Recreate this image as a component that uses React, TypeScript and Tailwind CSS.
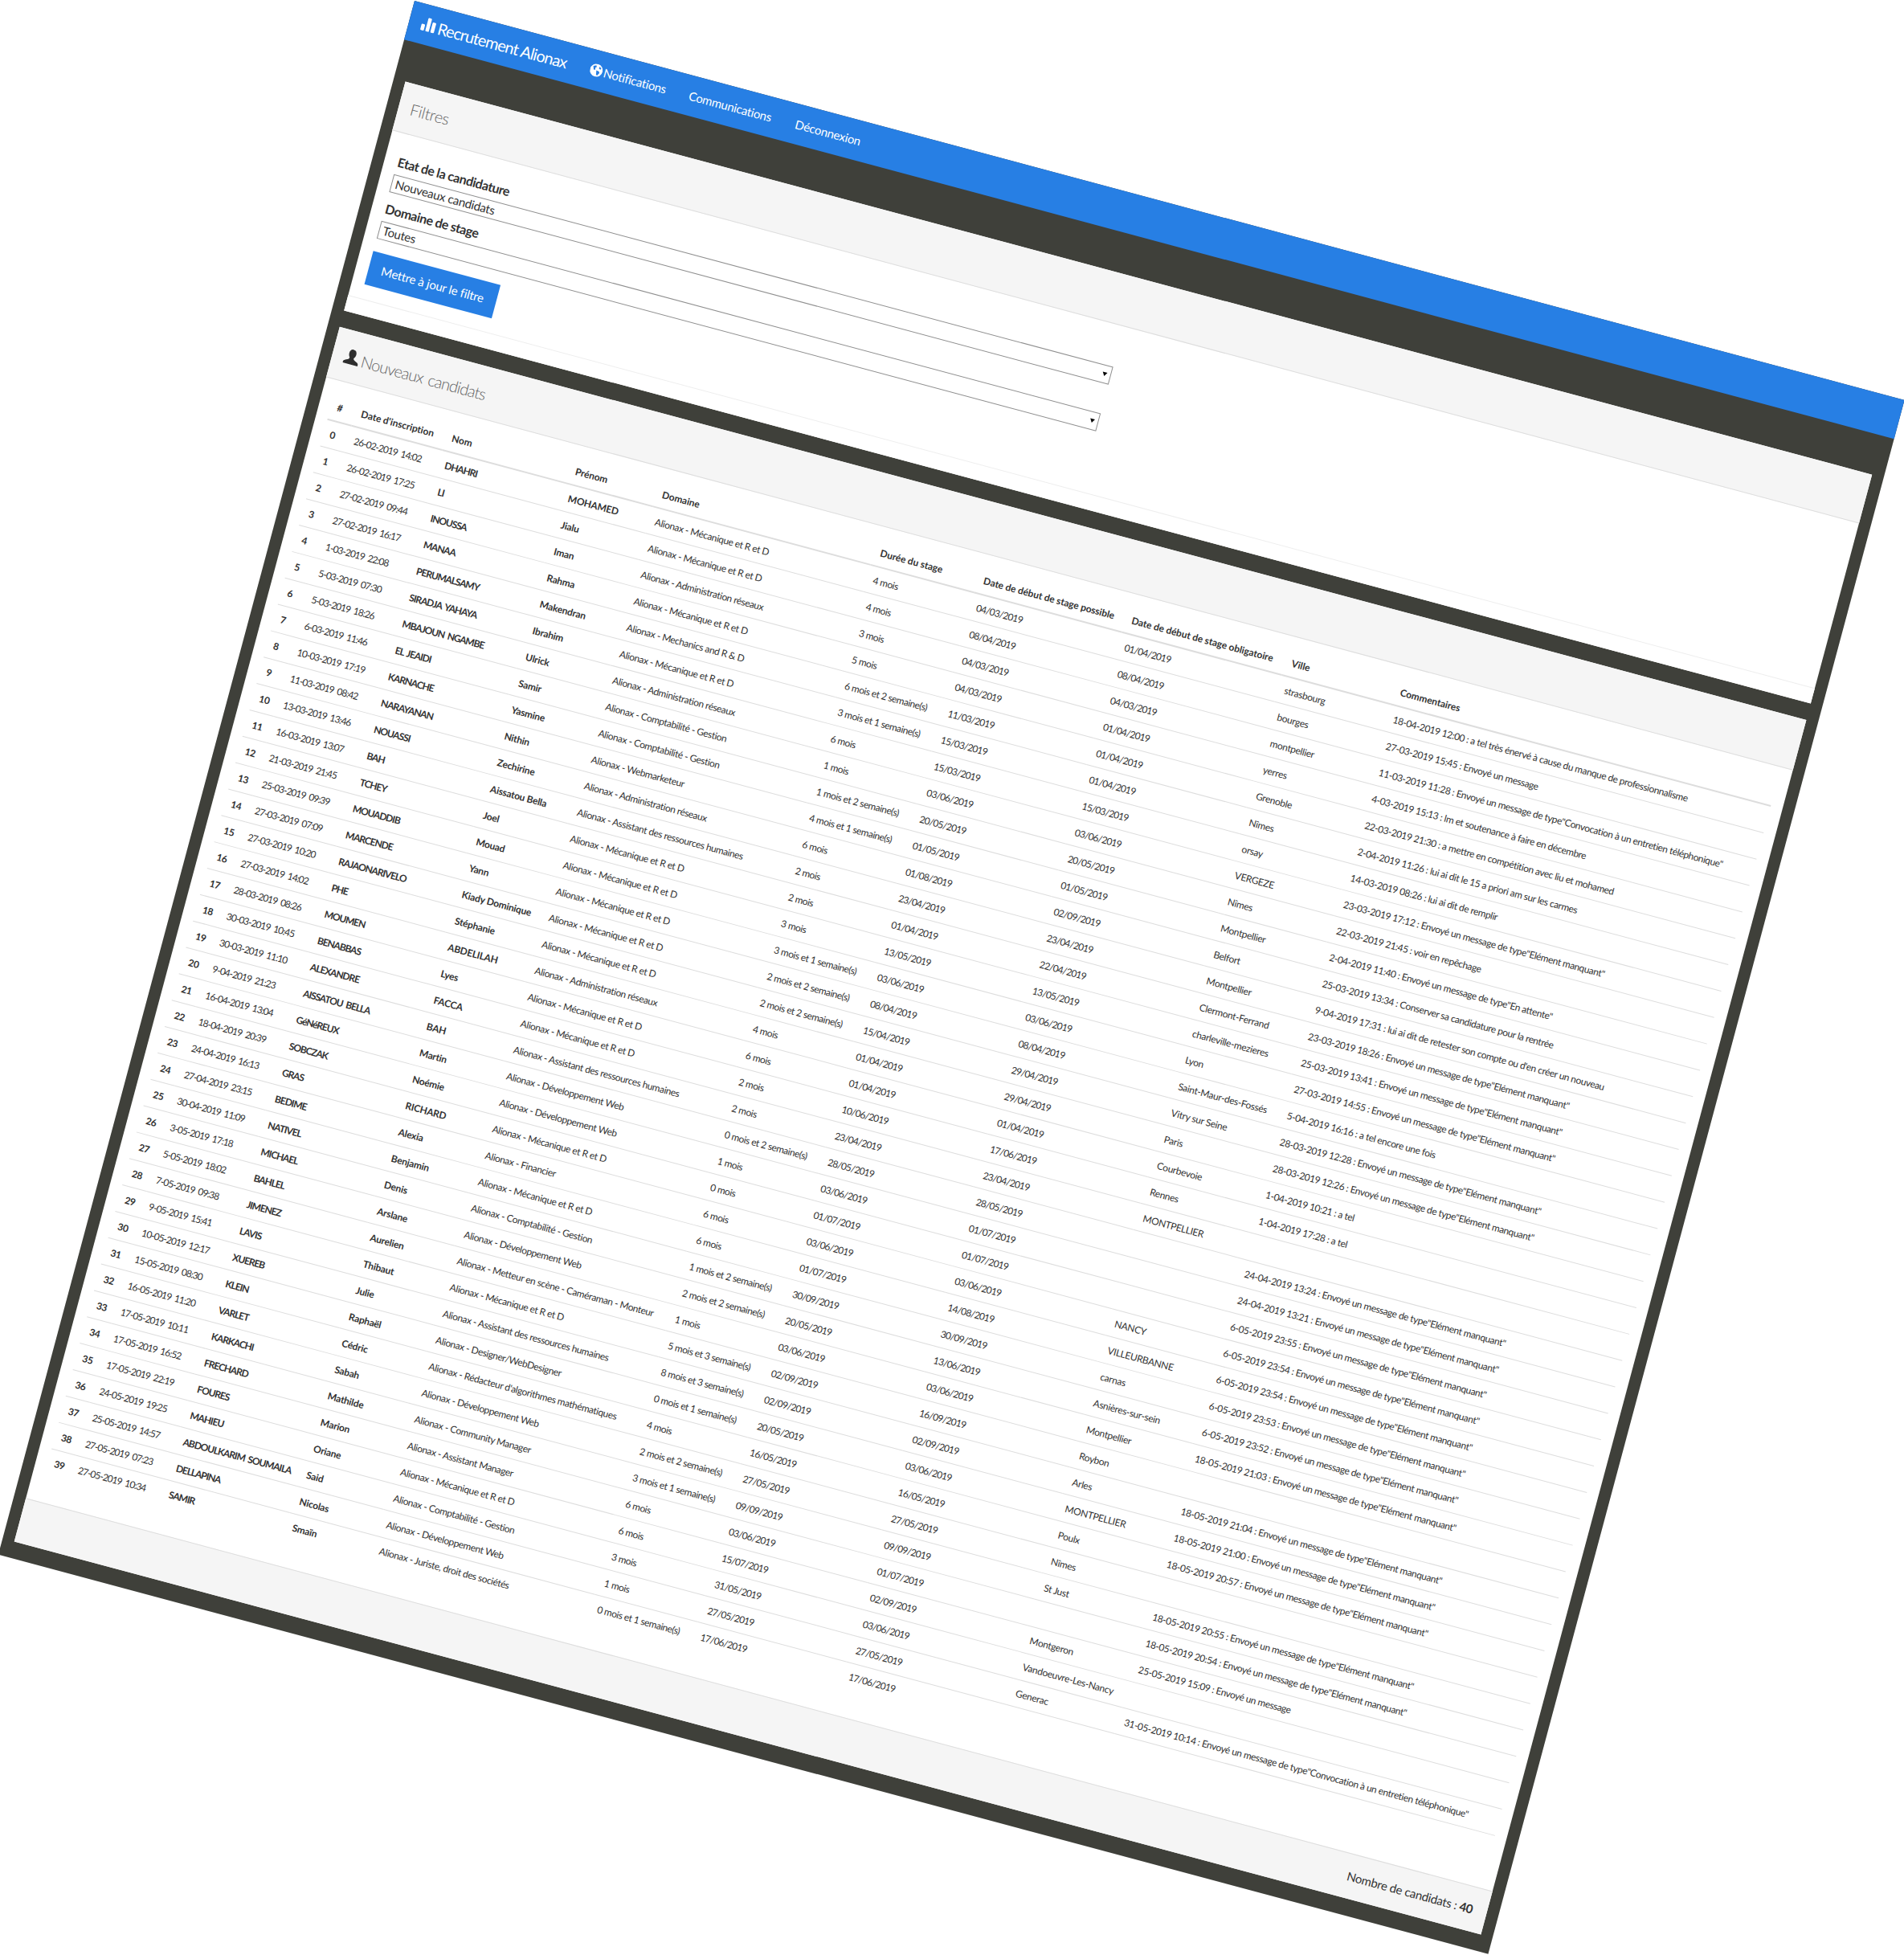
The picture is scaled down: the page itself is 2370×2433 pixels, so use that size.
/**
 * Recrutement Alionax: candidate list, photographed rotated by 15 degrees.
 */
const EM = 'Envoyé un message de type"Elément manquant"';
const CONV = 'Envoyé un message de type"Convocation à un entretien téléphonique"';
const MEC = 'Alionax - Mécanique et R et D';
const ADM = 'Alionax - Administration réseaux';
const COMPTA = 'Alionax - Comptabilité - Gestion';
const RH = 'Alionax - Assistant des ressources humaines';
const WEB = 'Alionax - Développement Web';

type Row = [string, string, string, string, string, string, string, string, string];

const rows: Row[] = [
  ['26-02-2019 14:02', 'DHAHRI', 'MOHAMED', MEC, '4 mois', '04/03/2019', '01/04/2019', 'strasbourg', '18-04-2019 12:00 : a tel très énervé à cause du manque de professionnalisme'],
  ['26-02-2019 17:25', 'LI', 'Jialu', MEC, '4 mois', '08/04/2019', '08/04/2019', 'bourges', '27-03-2019 15:45 : Envoyé un message'],
  ['27-02-2019 09:44', 'INOUSSA', 'Iman', ADM, '3 mois', '04/03/2019', '04/03/2019', 'montpellier', `11-03-2019 11:28 : ${CONV}`],
  ['27-02-2019 16:17', 'MANAA', 'Rahma', MEC, '5 mois', '04/03/2019', '01/04/2019', 'yerres', '4-03-2019 15:13 : lm et soutenance à faire en décembre'],
  ['1-03-2019 22:08', 'PERUMALSAMY', 'Makendran', 'Alionax - Mechanics and R & D', '6 mois et 2 semaine(s)', '11/03/2019', '01/04/2019', 'Grenoble', '22-03-2019 21:30 : a mettre en compétition avec liu et mohamed'],
  ['5-03-2019 07:30', 'SIRADJA YAHAYA', 'Ibrahim', MEC, '3 mois et 1 semaine(s)', '15/03/2019', '01/04/2019', 'Nîmes', '2-04-2019 11:26 : lui ai dit le 15 a priori am sur les carmes'],
  ['5-03-2019 18:26', 'MBAJOUN NGAMBE', 'Ulrick', ADM, '6 mois', '15/03/2019', '15/03/2019', 'orsay', '14-03-2019 08:26 : lui ai dit de remplir'],
  ['6-03-2019 11:46', 'EL JEAIDI', 'Samir', COMPTA, '1 mois', '03/06/2019', '03/06/2019', 'VERGEZE', `23-03-2019 17:12 : ${EM}`],
  ['10-03-2019 17:19', 'KARNACHE', 'Yasmine', COMPTA, '1 mois et 2 semaine(s)', '20/05/2019', '20/05/2019', 'Nîmes', '22-03-2019 21:45 : voir en repêchage'],
  ['11-03-2019 08:42', 'NARAYANAN', 'Nithin', 'Alionax - Webmarketeur', '4 mois et 1 semaine(s)', '01/05/2019', '01/05/2019', 'Montpellier', '2-04-2019 11:40 : Envoyé un message de type"En attente"'],
  ['13-03-2019 13:46', 'NOUASSI', 'Zechirine', ADM, '6 mois', '01/08/2019', '02/09/2019', 'Belfort', '25-03-2019 13:34 : Conserver sa candidature pour la rentrée'],
  ['16-03-2019 13:07', 'BAH', 'Aissatou Bella', RH, '2 mois', '23/04/2019', '23/04/2019', 'Montpellier', "9-04-2019 17:31 : lui ai dit de retester son compte ou d'en créer un nouveau"],
  ['21-03-2019 21:45', 'TCHEY', 'Joel', MEC, '2 mois', '01/04/2019', '22/04/2019', 'Clermont-Ferrand', `23-03-2019 18:26 : ${EM}`],
  ['25-03-2019 09:39', 'MOUADDIB', 'Mouad', MEC, '3 mois', '13/05/2019', '13/05/2019', 'charleville-mezieres', `25-03-2019 13:41 : ${EM}`],
  ['27-03-2019 07:09', 'MARCENDE', 'Yann', MEC, '3 mois et 1 semaine(s)', '03/06/2019', '03/06/2019', 'Lyon', `27-03-2019 14:55 : ${EM}`],
  ['27-03-2019 10:20', 'RAJAONARIVELO', 'Kiady Dominique', MEC, '2 mois et 2 semaine(s)', '08/04/2019', '08/04/2019', 'Saint-Maur-des-Fossés', '5-04-2019 16:16 : a tel encore une fois'],
  ['27-03-2019 14:02', 'PHE', 'Stéphanie', MEC, '2 mois et 2 semaine(s)', '15/04/2019', '29/04/2019', 'Vitry sur Seine', `28-03-2019 12:28 : ${EM}`],
  ['28-03-2019 08:26', 'MOUMEN', 'ABDELILAH', ADM, '4 mois', '01/04/2019', '29/04/2019', 'Paris', `28-03-2019 12:26 : ${EM}`],
  ['30-03-2019 10:45', 'BENABBAS', 'Lyes', MEC, '6 mois', '01/04/2019', '01/04/2019', 'Courbevoie', '1-04-2019 10:21 : a tel'],
  ['30-03-2019 11:10', 'ALEXANDRE', 'FACCA', MEC, '2 mois', '10/06/2019', '17/06/2019', 'Rennes', '1-04-2019 17:28 : a tel'],
  ['9-04-2019 21:23', 'AISSATOU BELLA', 'BAH', RH, '2 mois', '23/04/2019', '23/04/2019', 'MONTPELLIER', ''],
  ['16-04-2019 13:04', 'GéNéREUX', 'Martin', WEB, '0 mois et 2 semaine(s)', '28/05/2019', '28/05/2019', '', `24-04-2019 13:24 : ${EM}`],
  ['18-04-2019 20:39', 'SOBCZAK', 'Noémie', WEB, '1 mois', '03/06/2019', '01/07/2019', '', `24-04-2019 13:21 : ${EM}`],
  ['24-04-2019 16:13', 'GRAS', 'RICHARD', MEC, '0 mois', '01/07/2019', '01/07/2019', '', `6-05-2019 23:55 : ${EM}`],
  ['27-04-2019 23:15', 'BEDIME', 'Alexia', 'Alionax - Financier', '6 mois', '03/06/2019', '03/06/2019', 'NANCY', `6-05-2019 23:54 : ${EM}`],
  ['30-04-2019 11:09', 'NATIVEL', 'Benjamin', MEC, '6 mois', '01/07/2019', '14/08/2019', 'VILLEURBANNE', `6-05-2019 23:54 : ${EM}`],
  ['3-05-2019 17:18', 'MICHAEL', 'Denis', COMPTA, '1 mois et 2 semaine(s)', '30/09/2019', '30/09/2019', 'carnas', `6-05-2019 23:53 : ${EM}`],
  ['5-05-2019 18:02', 'BAHLEL', 'Arslane', WEB, '2 mois et 2 semaine(s)', '20/05/2019', '13/06/2019', 'Asnières-sur-sein', `6-05-2019 23:52 : ${EM}`],
  ['7-05-2019 09:38', 'JIMENEZ', 'Aurelien', 'Alionax - Metteur en scène - Caméraman - Monteur', '1 mois', '03/06/2019', '03/06/2019', 'Montpellier', `18-05-2019 21:03 : ${EM}`],
  ['9-05-2019 15:41', 'LAVIS', 'Thibaut', MEC, '5 mois et 3 semaine(s)', '02/09/2019', '16/09/2019', 'Roybon', ''],
  ['10-05-2019 12:17', 'XUEREB', 'Julie', RH, '8 mois et 3 semaine(s)', '02/09/2019', '02/09/2019', 'Arles', `18-05-2019 21:04 : ${EM}`],
  ['15-05-2019 08:30', 'KLEIN', 'Raphaël', 'Alionax - Designer/WebDesigner', '0 mois et 1 semaine(s)', '20/05/2019', '03/06/2019', 'MONTPELLIER', `18-05-2019 21:00 : ${EM}`],
  ['16-05-2019 11:20', 'VARLET', 'Cédric', "Alionax - Rédacteur d'algorithmes mathématiques", '4 mois', '16/05/2019', '16/05/2019', 'Poulx', `18-05-2019 20:57 : ${EM}`],
  ['17-05-2019 10:11', 'KARKACHI', 'Sabah', WEB, '2 mois et 2 semaine(s)', '27/05/2019', '27/05/2019', 'Nîmes', ''],
  ['17-05-2019 16:52', 'FRECHARD', 'Mathilde', 'Alionax - Community Manager', '3 mois et 1 semaine(s)', '09/09/2019', '09/09/2019', 'St Just', `18-05-2019 20:55 : ${EM}`],
  ['17-05-2019 22:19', 'FOURES', 'Marion', 'Alionax - Assistant Manager', '6 mois', '03/06/2019', '01/07/2019', '', `18-05-2019 20:54 : ${EM}`],
  ['24-05-2019 19:25', 'MAHIEU', 'Oriane', MEC, '6 mois', '15/07/2019', '02/09/2019', 'Montgeron', '25-05-2019 15:09 : Envoyé un message'],
  ['25-05-2019 14:57', 'ABDOULKARIM SOUMAILA', 'Said', COMPTA, '3 mois', '31/05/2019', '03/06/2019', 'Vandoeuvre-Les-Nancy', ''],
  ['27-05-2019 07:23', 'DELLAPINA', 'Nicolas', WEB, '1 mois', '27/05/2019', '27/05/2019', 'Generac', `31-05-2019 10:14 : ${CONV}`],
  ['27-05-2019 10:34', 'SAMIR', 'Smaïn', 'Alionax - Juriste, droit des sociétés', '0 mois et 1 semaine(s)', '17/06/2019', '17/06/2019', '', ''],
];

const headers = ['#', "Date d'inscription", 'Nom', 'Prénom', 'Domaine', 'Durée du stage', 'Date de début de stage possible', 'Date de début de stage obligatoire', 'Ville', 'Commentaires'];

function BarsIcon() {
  return (
    <svg viewBox="0 0 20 20" className="h-[22px] w-[20px] shrink-0 fill-white">
      <rect x="1" y="10" width="4.5" height="8" rx="1" />
      <rect x="7.5" y="1" width="4.5" height="17" rx="1" />
      <rect x="14" y="5" width="4.5" height="13" rx="1" />
    </svg>
  );
}

function GlobeIcon() {
  return (
    <svg viewBox="0 0 16 16" className="mr-[2px] h-[16px] w-[16px] shrink-0">
      <circle cx="8" cy="8" r="8" fill="#fff" />
      <path d="M3 3.500 6.500 2l1 2-1.500 1 .5 2.500-2 .5zM8 8l3.500.5 1 2-2 3.500-1.500-.5-.5-3zM11 2.500l2.500 2-1 1.500-2-1z" fill="#277fe4" />
    </svg>
  );
}

function UserIcon() {
  return (
    <svg viewBox="0 0 20 20" className="h-[21px] w-[21px] shrink-0 fill-[#2e2e2e]">
      <path d="M10 0c2.800 0 4.300 2.200 4.300 5 0 2-.8 3.800-1.800 5 0 1.300.6 2 2 2.700 2 1 4.500 1.700 4.500 3.300v2H1v-2c0-1.600 2.500-2.300 4.500-3.300 1.400-.7 2-1.400 2-2.700-1-1.200-1.800-3-1.800-5C5.700 2.200 7.200 0 10 0z" />
    </svg>
  );
}

function FilterSelect({ value }: { value: string }) {
  return (
    <div className="relative h-[23px] w-[927px]">
      <select className="block h-[23px] w-full appearance-none border border-[#8f8f8f] bg-white pl-[4px] text-[15px] leading-[21px] tracking-[-0.3px] text-[#333]" defaultValue={value}>
        <option>{value}</option>
      </select>
      <span className="absolute right-[5px] top-[9px] h-0 w-0 border-x-[3.5px] border-t-[5px] border-x-transparent border-t-black" />
    </div>
  );
}

export default function App() {
  return (
    <div className="h-[2433px] w-[2370px] overflow-hidden bg-white font-['Lato',sans-serif] text-[#333]">
      <div className="ml-[516px] mt-[1px] flex h-[2002px] w-[1920px] origin-top-left rotate-[15deg] flex-col bg-[#3f403a]">
        <nav className="flex h-[50px] shrink-0 items-center bg-[#277fe4] pl-[15px] text-[15px] tracking-[-0.3px] text-white">
          <BarsIcon />
          <span className="ml-[2px] w-[195.500px] text-[20px] tracking-[-0.9px]">Recrutement Alionax</span>
          <GlobeIcon />
          <span className="w-[110px]">Notifications</span>
          <span className="w-[137px]">Communications</span>
          <span>Déconnexion</span>
        </nav>

        <main className="flex flex-1 flex-col px-[15px] pb-[21px] pt-[50px]">
          <section className="flex h-[295px] shrink-0 flex-col bg-white">
            <h3 className="flex h-[63px] items-center border-b border-[#ddd] bg-[#f5f5f5] px-[15px] text-[20px] font-light tracking-[-0.4px] text-[#666]">Filtres</h3>
            <form className="flex-1 px-[16px] pt-[24px]">
              <label className="mb-[5px] ml-[1px] block text-[16px] font-bold leading-[23px] tracking-[-0.5px]">Etat de la candidature</label>
              <FilterSelect value="Nouveaux candidats" />
              <label className="mb-[5px] ml-[1px] mt-[9px] block text-[16px] font-bold leading-[23px] tracking-[-0.5px]">Domaine de stage</label>
              <FilterSelect value="Toutes" />
              <button type="button" className="mt-[16px] h-[43px] w-[164px] bg-[#277fe4] text-[15px] tracking-[-0.2px] text-white">Mettre à jour le filtre</button>
            </form>
            <div className="h-[20px] border-t border-[#eee] bg-white" />
          </section>

          <section className="mt-[21px] flex flex-1 flex-col bg-white">
            <h3 className="flex h-[65px] shrink-0 items-center gap-[2px] border-b border-[#ddd] bg-[#f5f5f5] px-[15px] pt-[3px] text-[20px] font-light tracking-[-0.9px] text-[#666] [word-spacing:2px]">
              <span className="ml-[-1px]"><UserIcon /></span>
              Nouveaux candidats
            </h3>
            <div className="flex-1 px-[15px] pt-[15px]">
              <table className="w-full table-fixed border-collapse text-[12px] leading-[17px]">
                <colgroup>
                  <col className="w-[31px]" />
                  <col className="w-[117px]" />
                  <col className="w-[159px]" />
                  <col className="w-[112px]" />
                  <col className="w-[281px]" />
                  <col className="w-[133px]" />
                  <col className="w-[191px]" />
                  <col className="w-[206px]" />
                  <col className="w-[140px]" />
                  <col />
                </colgroup>
                <thead>
                  <tr className="h-[35px] border-b-2 border-[#ddd]">
                    {headers.map((h) => (
                      <th key={h} className="whitespace-nowrap px-[8px] text-left font-bold tracking-[-0.05px]">{h}</th>
                    ))}
                  </tr>
                </thead>
                <tbody>
                  {rows.map((r, i) => (
                    <tr key={i} className="h-[34px] border-t border-[#ddd]">
                      <td className="px-[8px] font-bold tracking-[-0.4px]">{i}</td>
                      <td className="whitespace-nowrap px-[8px] tracking-[-0.85px] [word-spacing:2px]">{r[0]}</td>
                      <td className="whitespace-nowrap px-[8px] font-bold tracking-[-0.9px] [word-spacing:2px]">{r[1]}</td>
                      <td className="whitespace-nowrap px-[8px] font-bold tracking-[-0.2px]">{r[2]}</td>
                      <td className="whitespace-nowrap px-[8px] tracking-[-0.4px]">{r[3]}</td>
                      <td className="whitespace-nowrap px-[8px] tracking-[-0.45px]">{r[4]}</td>
                      <td className="whitespace-nowrap px-[8px] tracking-[-0.7px]">{r[5]}</td>
                      <td className="whitespace-nowrap px-[8px] tracking-[-0.7px]">{r[6]}</td>
                      <td className="whitespace-nowrap px-[8px] tracking-[-0.3px]">{r[7]}</td>
                      <td className="whitespace-nowrap px-[8px] tracking-[-0.4px]">{r[8]}</td>
                    </tr>
                  ))}
                </tbody>
              </table>
            </div>
            <div className="flex h-[56px] shrink-0 items-center justify-end border-t border-[#ddd] bg-[#f5f5f5] px-[18px] text-[15px] tracking-[-0.3px]">
              Nombre de candidats :&nbsp;<strong>40</strong>
            </div>
          </section>
        </main>
      </div>
    </div>
  );
}
